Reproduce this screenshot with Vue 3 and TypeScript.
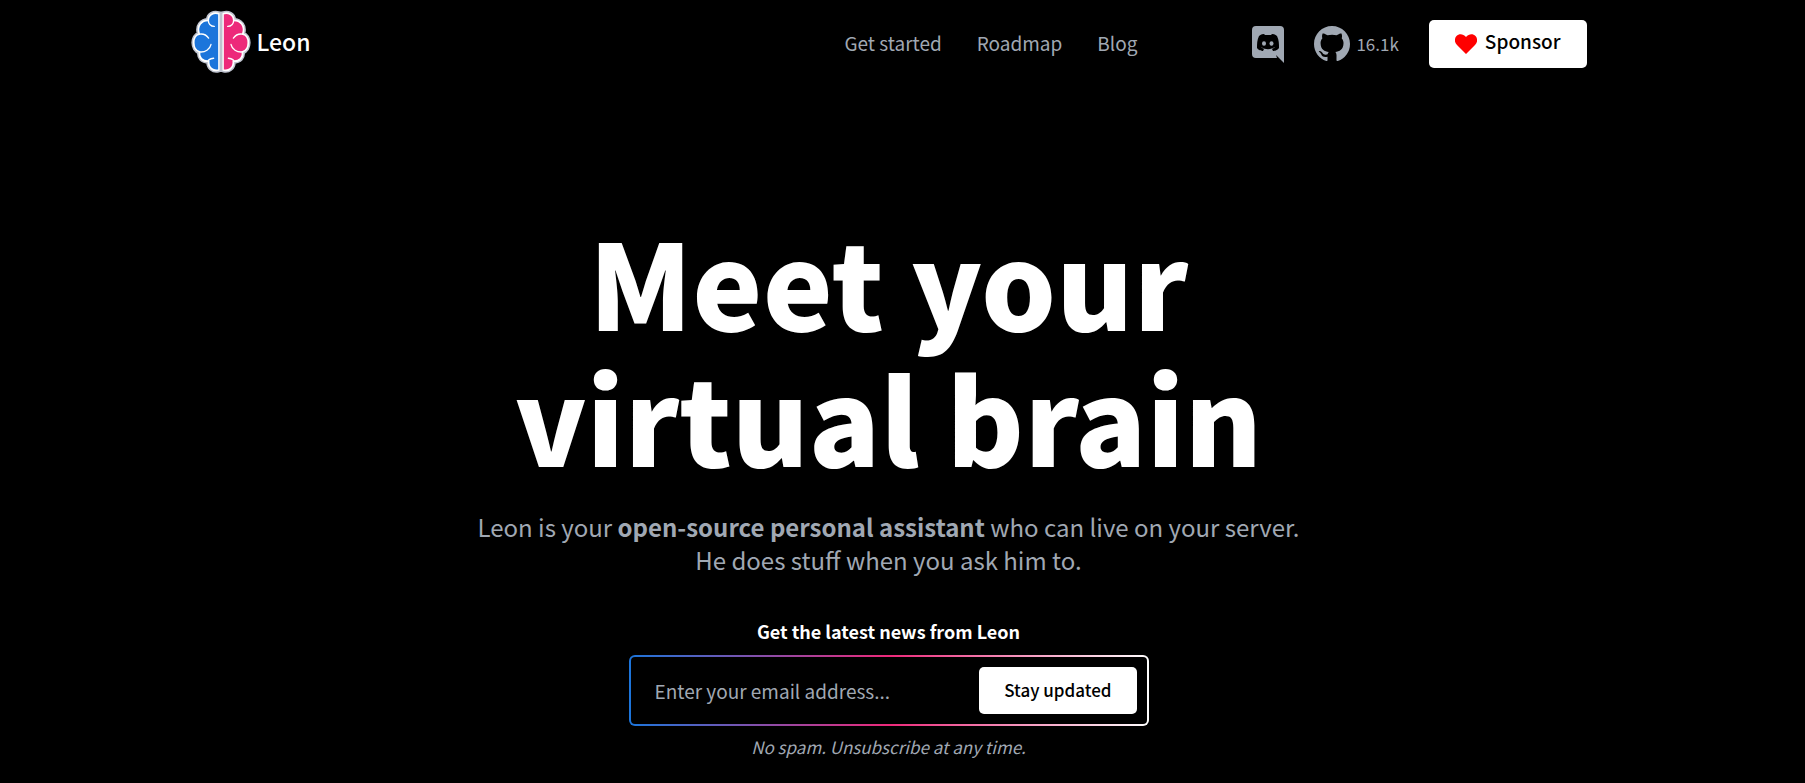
<script setup lang="ts">
import { ref } from 'vue'

interface BrainHalf {
  fill: string
  transform?: string
}

const links: string[] = ['Get started', 'Roadmap', 'Blog']
const halves: BrainHalf[] = [
  { fill: '#1c75db' },
  { fill: '#ed297a', transform: 'translate(242 0) scale(-1 1)' },
]
const outline =
  'M115 42C100 37 83 44 83 62C63 62 48 78 56 103C34 107 34 150 57 156C54 172 64 184 84 184C83 204 98 215 115 210Z'
const folds = 'M83 62C84 73 90 80 101 80M56 103C68 101 78 106 84 115M57 156C74 158 88 148 91 134M84 184C82 182 86 176 99 175M57 168C64 184 78 186 84 183'
const email = ref<string>('')
</script>

<template>
  <div class="page">
    <header class="header">
      <a class="brand" href="#" aria-label="Leon home">
        <svg class="brain" viewBox="32 31 178 188" aria-hidden="true">
          <path d="M111 42H131V210H111Z" fill="#bfc3cf" stroke="#bfc3cf" stroke-width="12" stroke-linejoin="round" />
          <g v-for="half in halves" :key="half.fill" :transform="half.transform">
            <path :d="outline" fill="none" stroke="#bfc3cf" stroke-width="14" stroke-linejoin="round" />
          </g>
          <g v-for="half in halves" :key="half.fill" :transform="half.transform">
            <path :d="outline" :fill="half.fill" stroke="#fff" stroke-width="5" stroke-linejoin="round" />
            <path :d="folds" fill="none" stroke="#fff" stroke-width="4" stroke-linecap="round" />
          </g>
          <path d="M121 36V216" stroke="#bfc3cf" stroke-width="8" />
        </svg>
        <span class="brand-name">Leon</span>
      </a>
      <nav class="nav" aria-label="Main">
        <a v-for="link in links" :key="link" href="#">{{ link }}</a>
      </nav>
      <div class="social">
        <a class="icon-link" href="#" aria-label="Discord">
          <svg class="discord" viewBox="0 0 32 37" aria-hidden="true">
            <path fill="#a0a8b3" d="M4 0H28Q32 0 32 4V37L24 29L25 32H4Q0 32 0 28V4Q0 0 4 0Z" />
            <path fill="#000" d="M12 8C9 8 7 10 7 10C5 14 5 18 5 22C7 25 11 25 11 25L12 23C10 22 9 21 9 21C14 24 18 24 23 21C23 21 22 22 20 23L21 25C21 25 25 25 27 22C27 18 27 14 25 10C25 10 23 8 20 8L19 9C17 9 15 9 13 9Z" />
            <ellipse cx="12" cy="17.5" rx="2" ry="2.2" fill="#a0a8b3" />
            <ellipse cx="19.5" cy="17.5" rx="2" ry="2.2" fill="#a0a8b3" />
          </svg>
        </a>
        <a class="icon-link" href="#" aria-label="GitHub, 16.1k stars">
          <svg class="github" viewBox="0 0 16 16" aria-hidden="true">
            <path fill="#a0a8b3" d="M8 0C3.58 0 0 3.58 0 8c0 3.54 2.29 6.53 5.47 7.59.4.07.55-.17.55-.38 0-.19-.01-.82-.01-1.49-2.01.37-2.53-.49-2.69-.94-.09-.23-.48-.94-.82-1.13-.28-.15-.68-.52-.01-.53.63-.01 1.08.58 1.23.82.72 1.21 1.87.87 2.33.66.07-.52.28-.87.51-1.07-1.78-.2-3.64-.89-3.64-3.95 0-.87.31-1.59.82-2.15-.08-.2-.36-1.02.08-2.12 0 0 .67-.21 2.2.82.64-.18 1.32-.27 2-.27s1.36.09 2 .27c1.53-1.04 2.2-.82 2.2-.82.44 1.1.16 1.92.08 2.12.51.56.82 1.27.82 2.15 0 3.07-1.87 3.75-3.65 3.95.29.25.54.73.54 1.48 0 1.07-.01 1.93-.01 2.2 0 .21.15.46.55.38A8.01 8.01 0 0 0 16 8c0-4.42-3.58-8-8-8z" />
          </svg>
          <span>16.1k</span>
        </a>
      </div>
      <a class="button sponsor" href="#">
        <svg class="heart" viewBox="0 0 22 20" aria-hidden="true">
          <path fill="#f00" d="M11 20L2 11C-1 8-.5 4 1.500 2C4-.5 8-.5 11 3C14-.5 18-.5 20.500 2C22.500 4 23 8 20 11Z" />
        </svg>
        <span>Sponsor</span>
      </a>
    </header>
    <main class="hero">
      <h1>Meet your<br />virtual brain</h1>
      <p class="lead">
        Leon is your <strong>open-source personal assistant</strong> who can live on your server.<br />
        He does stuff when you ask him to.
      </p>
      <form class="newsletter" @submit.prevent>
        <label for="email">Get the latest news from Leon</label>
        <div class="field">
          <input id="email" v-model="email" type="email" placeholder="Enter your email address..." />
          <button class="button" type="submit">Stay updated</button>
        </div>
        <p class="note">No spam. Unsubscribe at any time.</p>
      </form>
    </main>
  </div>
</template>

<style>
body {
  margin: 0;
  background: #000;
}
</style>

<style scoped>
.page {
  min-height: 100vh;
  box-sizing: border-box;
  padding-right: 28px;
  background: #000;
  color: #a0a8b3;
  font-family: "Noto Sans CJK JP", "Noto Sans", sans-serif;
}
.header {
  display: flex;
  align-items: center;
  height: 88px;
  width: 90%;
  max-width: 1396px;
  margin: 0 auto;
}
a {
  color: inherit;
  text-decoration: none;
}
.brand {
  display: flex;
  align-items: center;
  color: #fff;
  gap: 6px;
  padding-bottom: 6px;
}
.brain {
  width: 60px;
  height: 63px;
}
.brand-name {
  font-size: 23px;
  line-height: 32px;
  font-weight: 500;
}
.nav {
  margin-left: auto;
  display: flex;
  gap: 35px;
  padding-bottom: 2px;
  font-size: 19px;
  line-height: 32px;
}
.social {
  display: flex;
  align-items: center;
  gap: 30px;
  margin: 0 30px 0 115px;
}
.icon-link {
  display: flex;
  align-items: center;
  gap: 6px;
  font-size: 17px;
  line-height: 32px;
}
.discord {
  width: 32px;
  height: 37px;
}
.github {
  width: 36px;
  height: 36px;
}
.button {
  box-sizing: border-box;
  border: 0;
  border-radius: 5px;
  background: #fff;
  color: #000;
  font-family: inherit;
  font-weight: 500;
  font-size: 17px;
  padding: 0 25px 2px;
  height: 47px;
  line-height: 44px;
}
.sponsor {
  display: flex;
  align-items: baseline;
  gap: 8px;
  padding: 0 26px;
  height: 48px;
  font-size: 19px;
  line-height: 42px;
}
.heart {
  width: 22px;
  height: 20px;
  align-self: center;
}
.hero {
  text-align: center;
}
h1 {
  margin: 124px 0 26px;
  color: #fff;
  font-size: 118px;
  line-height: 136px;
  font-weight: 900;
}
.lead {
  margin: 0;
  font-size: 24px;
  line-height: 33px;
}
.newsletter {
  max-width: 520px;
  margin: 39px auto 0;
}
label {
  display: block;
  margin-bottom: 8px;
  color: #fff;
  font-size: 18px;
  font-weight: 700;
  line-height: 32px;
}
.field {
  display: flex;
  align-items: center;
  box-sizing: border-box;
  height: 71px;
  border: 2px solid transparent;
  border-radius: 6px;
  padding: 0 10px 0 24px;
  background:
    linear-gradient(#000, #000) padding-box,
    linear-gradient(90deg, #1c75db, #ed297a 50%, #fff) border-box;
}
input {
  flex: 1;
  min-width: 0;
  border: 0;
  padding: 0;
  outline: 0;
  background: none;
  color: #fff;
  font: inherit;
  font-size: 19px;
}
input::placeholder {
  color: #a0a8b3;
  opacity: 1;
}
.note {
  margin: 8px 0 0;
  font-size: 17px;
  line-height: 26px;
  font-style: italic;
}
</style>
